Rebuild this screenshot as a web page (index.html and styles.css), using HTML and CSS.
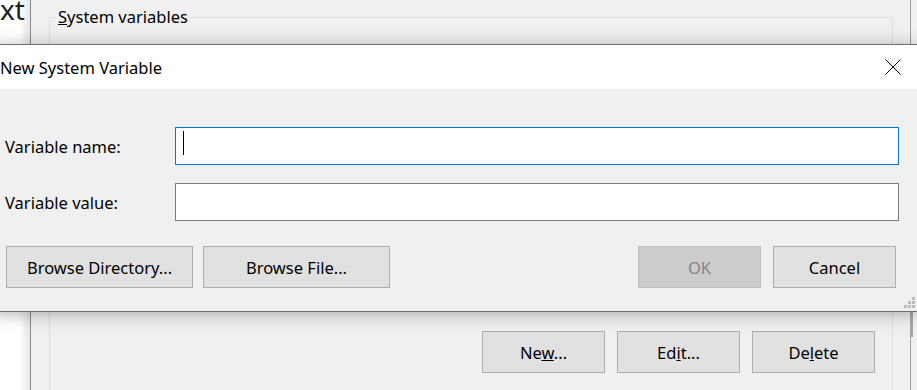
FILE: index.html
```html
<!DOCTYPE html>
<html lang="en">
<head>
    <meta charset="UTF-8">
    <title>New System Variable</title>
    <link rel="stylesheet" href="styles.css">
</head>
<body>

    <!-- Environment Variables window (behind) -->
    <div class="window">
        <div class="side"><span class="side-text">xt</span></div>
        <div class="main">
            <div class="group">
                <div class="group-title"><u>S</u>ystem variables</div>
                <div class="group-actions">
                    <button class="btn">Ne<u>w</u>...</button>
                    <button class="btn">Ed<u>i</u>t...</button>
                    <button class="btn">De<u>l</u>ete</button>
                </div>
            </div>
        </div>
        <div class="edge"><div class="edge-thumb"></div></div>
    </div>

    <!-- New System Variable dialog -->
    <div class="dialog">
        <div class="title-bar">
            <span class="title">New System Variable</span>
            <svg class="close" width="16" height="16" viewBox="0 0 16 16">
                <path d="M0.5 0.5 L15.5 15.5 M15.5 0.5 L0.5 15.5" stroke="#000" stroke-width="1" fill="none"/>
            </svg>
        </div>
        <div class="dialog-body">
            <div class="fields">
                <label class="field-label">Variable name:</label>
                <div class="field focused"><span class="caret"></span></div>
                <label class="field-label">Variable value:</label>
                <div class="field"></div>
            </div>
            <div class="dialog-actions">
                <div class="browse">
                    <button class="btn btn-wide">Browse Directory...</button>
                    <button class="btn btn-wide">Browse File...</button>
                </div>
                <div class="confirm">
                    <button class="btn" disabled>OK</button>
                    <button class="btn">Cancel</button>
                </div>
            </div>
        </div>
        <svg class="grip" width="14" height="12" viewBox="0 0 14 12">
            <rect x="10" y="0" width="3" height="3" fill="#bcbcbc"/>
            <rect x="6" y="4" width="3" height="3" fill="#bcbcbc"/>
            <rect x="10" y="4" width="3" height="3" fill="#bcbcbc"/>
            <rect x="2" y="8" width="3" height="3" fill="#bcbcbc"/>
            <rect x="6" y="8" width="3" height="3" fill="#bcbcbc"/>
            <rect x="10" y="8" width="3" height="3" fill="#bcbcbc"/>
        </svg>
    </div>

</body>
</html>
```

FILE: styles.css
```css
body {
    margin: 0;
    font-family: "Noto Sans", "Open Sans", sans-serif;
    font-size: 16.5px;
    color: #000;
    background-color: #f0f0f0;
    overflow: hidden;
}

/* Window behind the dialog */
.window {
    display: flex;
    height: 390px;
    overflow: hidden;
}
.side {
    width: 30px;
    border-right: 1px solid #8c8c8c;
    background: linear-gradient(to right, #ffffff 0, #ffffff 19px, #e6e6e6 30px);
    overflow: hidden;
}
.side-text {
    display: block;
    margin-top: -10px;
    font-size: 28px;
    line-height: 38px;
    color: #1e1e1e;
    white-space: nowrap;
}
.main {
    flex-grow: 1;
    padding: 17px 17px 0 18px;
}
.group {
    height: 400px;
    border: 1px solid #dcdcdc;
    border-bottom: none;
}
.group-title {
    display: inline-block;
    margin: -12px 0 0 6px;
    padding: 0 2px;
    line-height: 22px;
    background-color: #f0f0f0;
    vertical-align: top;
}
.group-actions {
    display: flex;
    justify-content: flex-end;
    gap: 12px;
    margin-top: 290px;
    padding-right: 17px;
}
.edge {
    width: 6px;
    border-left: 1px solid #a0a0a0;
    padding-top: 312px;
}
.edge-thumb {
    width: 2px;
    height: 25px;
    background-color: #a8a8a8;
}

/* Buttons */
.btn {
    width: 123px;
    height: 42px;
    padding: 0;
    font-family: inherit;
    font-size: 16.5px;
    color: #000;
    background-color: #e1e1e1;
    border: 1px solid #adadad;
    border-radius: 0;
}
.btn:disabled {
    color: #838383;
    background-color: #cccccc;
    border-color: #bfbfbf;
}
.btn-wide {
    width: 187px;
}

/* Dialog */
.dialog {
    position: absolute;
    top: 44px;
    left: -8px;
    width: 926px;
    border-top: 1px solid #6e6e6e;
    border-bottom: 1px solid #6e6e6e;
    box-shadow: 0 2px 16px rgba(0, 0, 0, 0.3);
}
.title-bar {
    height: 44px;
    display: flex;
    align-items: center;
    justify-content: space-between;
    padding: 0 17px 0 8px;
    background-color: #ffffff;
}
.close {
    display: block;
    margin-top: -1px;
}
.dialog-body {
    background-color: #f0f0f0;
    padding: 38px 19px 23px 13px;
}
.fields {
    display: grid;
    grid-template-columns: 170px 1fr;
    row-gap: 18px;
    align-items: center;
}
.field {
    position: relative;
    height: 36px;
    background-color: #ffffff;
    border: 1px solid #7a7a7a;
}
.field.focused {
    border-color: #0078d7;
}
.caret {
    position: absolute;
    left: 7px;
    top: 3px;
    width: 1px;
    height: 24px;
    background-color: #000;
}
.dialog-actions {
    display: flex;
    justify-content: space-between;
    margin-top: 25px;
}
.browse {
    display: flex;
    gap: 10px;
    margin-left: 1px;
}
.confirm {
    display: flex;
    gap: 12px;
    margin-right: 3px;
}
.grip {
    position: absolute;
    right: 2px;
    bottom: 2px;
}
```
